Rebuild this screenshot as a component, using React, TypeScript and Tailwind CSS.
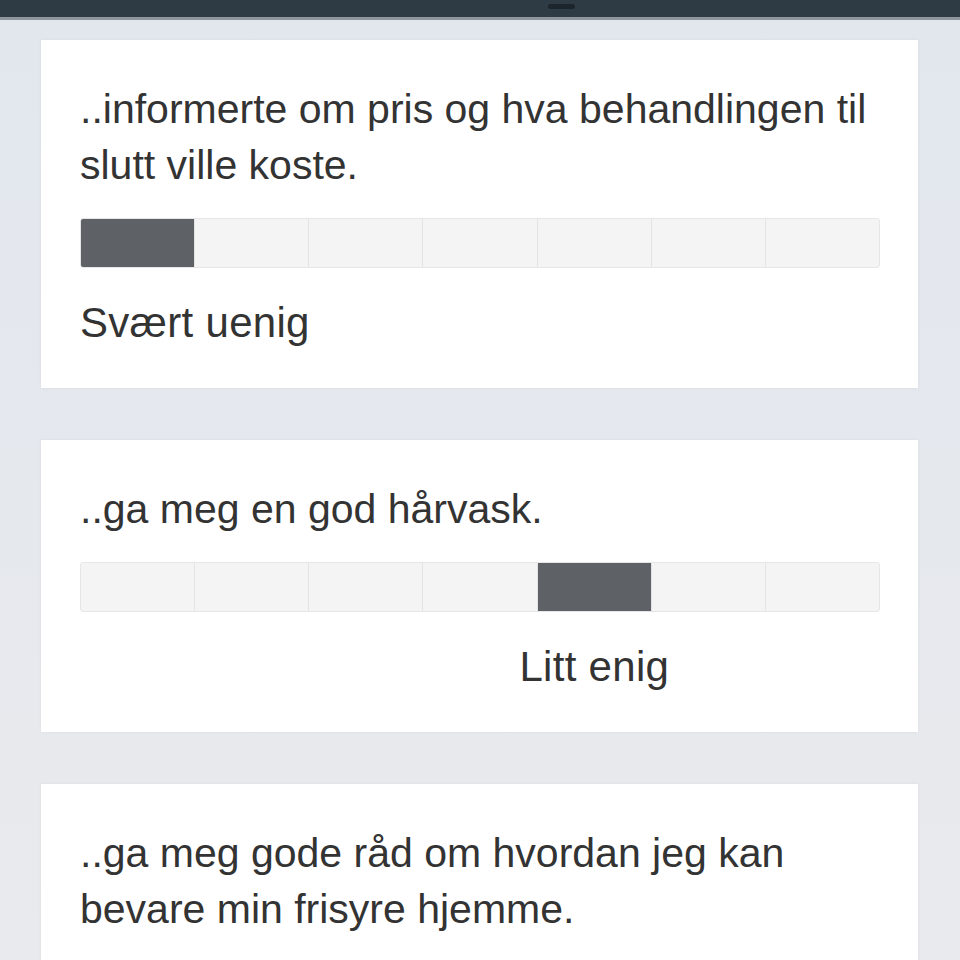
import React from "react";

const LABELS = [
  "Svært uenig",
  "Uenig",
  "Litt uenig",
  "Nøytral",
  "Litt enig",
  "Enig",
  "Svært enig",
];

interface QuestionProps {
  text: string;
  value?: number;
}

const Scale = ({ value }: { value?: number }) => {
  return (
    <div className="flex h-[50px] rounded-[3px] border border-[#e6e6e6] bg-[#f4f4f4] overflow-hidden">
      {LABELS.map((label, i) => (
        <div
          key={label}
          className={`flex-1 ${i > 0 ? "border-l border-[#e3e3e3]" : ""} ${
            value === i ? "bg-[#5e6166]" : ""
          }`}
        />
      ))}
    </div>
  );
};

const Question = ({ text, value }: QuestionProps) => {
  const step = 100 / LABELS.length;
  return (
    <div className="bg-white pl-[39px] pr-[38px] pt-[41px] pb-[37px] shadow-[0_0_3px_rgba(0,0,0,0.06)]">
      <p className="text-[41px] leading-[56px] text-[#333]">{text}</p>
      <div className="mt-[25px]">
        <Scale value={value} />
      </div>
      {value !== undefined && (
        <div className="relative mt-[27px] h-[56px] text-[42px] leading-[56px] text-[#333] tracking-[0.3px]">
          {value === 0 ? (
            <span>{LABELS[value]}</span>
          ) : (
            <span
              className="absolute top-0 -translate-x-1/2 whitespace-nowrap"
              style={{ left: `${step * value + step / 2}%` }}
            >
              {LABELS[value]}
            </span>
          )}
        </div>
      )}
    </div>
  );
};

export default function App() {
  return (
    <div
      className="h-[960px] overflow-hidden bg-[#e9eaed]"
      style={{ fontFamily: '"Liberation Sans", Arial, sans-serif' }}
    >
      <div className="relative h-[17px] bg-[#2e3a44]">
        <div className="absolute left-[548px] top-[4px] h-[5px] w-[27px] rounded-sm bg-[#1c252c]" />
      </div>
      <div className="h-[3px] bg-[#8e959c]" />
      <div className="bg-gradient-to-b from-[#e2e7ee] to-[#e9eaed] px-[41px] pt-[20px] pr-[42px] flex flex-col gap-[52px]">
        <Question text="..informerte om pris og hva behandlingen til slutt ville koste." value={0} />
        <Question text="..ga meg en god hårvask." value={4} />
        <Question text="..ga meg gode råd om hvordan jeg kan bevare min frisyre hjemme." />
      </div>
    </div>
  );
}
